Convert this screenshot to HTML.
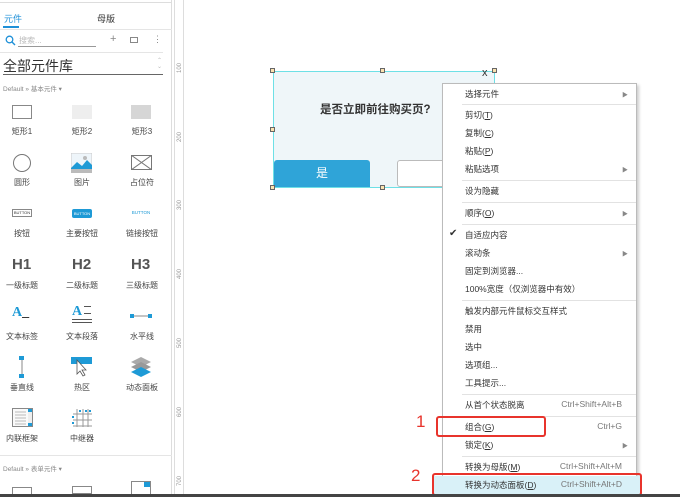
<!DOCTYPE html>
<html><head><meta charset="utf-8"><style>
*{margin:0;padding:0;box-sizing:border-box}
body{width:680px;height:497px;overflow:hidden;background:#fff;font-family:"Liberation Sans","Noto Sans CJK SC",sans-serif;position:relative;color:#333}
.a{position:absolute}
.lbl{position:absolute;font-size:8px;color:#444;width:60px;text-align:center}
.mi{position:absolute;left:465px;font-size:8.5px;color:#333}
.sc{position:absolute;right:58px;font-size:8.5px;color:#777}
.ar{position:absolute;left:622px;font-size:6px;color:#888}
.sep{position:absolute;left:462px;width:174px;height:1px;background:#e2e2e2}
.rl{position:absolute;left:175px;font-size:6px;color:#999;transform:rotate(-90deg)}
.h{position:absolute;width:5px;height:5px;background:#fbe3b0;border:1px solid #666}
</style></head><body>
<div class="a" style="left:0;top:0;width:172px;height:497px;background:#fff;border-right:1px solid #ddd"></div>
<div class="a" style="left:0;top:2px;width:172px;height:1px;background:#ddd"></div>
<div class="a" style="left:4px;top:12px;font-size:9px;color:#1e90d8">元件</div>
<div class="a" style="left:3px;top:26px;width:16px;height:2px;background:#1e90d8"></div>
<div class="a" style="left:97px;top:12px;font-size:9px;color:#333">母版</div>
<div class="a" style="left:0;top:29px;width:172px;height:1px;background:#e5e5e5"></div>
<svg class="a" style="left:5px;top:35px" width="11" height="11"><circle cx="4.5" cy="4.5" r="3.3" stroke="#1e90d8" stroke-width="1.3" fill="none"/><path d="M7 7l3 3" stroke="#1e90d8" stroke-width="1.4"/></svg>
<div class="a" style="left:19px;top:35px;font-size:8px;color:#bbb">搜索...</div>
<div class="a" style="left:18px;top:46px;width:78px;height:1px;background:#999"></div>
<div class="a" style="left:110px;top:33px;font-size:11px;color:#888">+</div>
<div class="a" style="left:130px;top:37px;width:8px;height:6px;border:1px solid #888"></div>
<div class="a" style="left:153px;top:34px;font-size:9px;color:#888">⋮</div>
<div class="a" style="left:0;top:52px;width:163px;height:1px;background:#e5e5e5"></div>
<div class="a" style="left:3px;top:56px;font-size:14px;color:#333">全部元件库</div>
<div class="a" style="left:157px;top:58px;font-size:6px;color:#bbb;line-height:6px">⌃<br>⌄</div>
<div class="a" style="left:3px;top:74px;width:160px;height:1px;background:#666"></div>
<div class="a" style="left:3px;top:83px;font-size:6.5px;color:#888">Default » 基本元件 ▾</div>
<!-- row1 -->
<div class="a" style="left:12px;top:105px;width:20px;height:14px;border:1px solid #888"></div>
<div class="a" style="left:72px;top:105px;width:20px;height:14px;background:#eee"></div>
<div class="a" style="left:131px;top:105px;width:20px;height:14px;background:#d6d6d6"></div>
<div class="lbl" style="left:-8px;top:126px">矩形1</div><div class="lbl" style="left:52px;top:126px">矩形2</div><div class="lbl" style="left:112px;top:126px">矩形3</div>
<!-- row2 -->
<div class="a" style="left:13px;top:154px;width:18px;height:18px;border:1px solid #777;border-radius:50%"></div>
<svg class="a" style="left:71px;top:153px" width="21" height="20"><rect width="21" height="20" fill="#eef5fa" stroke="#ccc"/><path d="M0 15L6 9l5 4 5-6 5 5v8H0z" fill="#1e9ad6"/><circle cx="14" cy="5" r="2" fill="#bbb"/><rect y="16" width="21" height="4" fill="#bbb"/></svg>
<svg class="a" style="left:131px;top:155px" width="21" height="15"><rect x=".5" y=".5" width="20" height="14" fill="none" stroke="#777"/><path d="M0 0L21 15M21 0L0 15" stroke="#777"/></svg>
<div class="lbl" style="left:-8px;top:177px">圆形</div><div class="lbl" style="left:52px;top:177px">图片</div><div class="lbl" style="left:112px;top:177px">占位符</div>
<!-- row3 -->
<div class="a" style="left:12px;top:209px;width:20px;height:8px;border:1px solid #888;font-size:4px;text-align:center;line-height:6px">BUTTON</div>
<div class="a" style="left:72px;top:209px;width:20px;height:9px;background:#1e9ad6;border-radius:2px;font-size:4px;color:#fff;text-align:center;line-height:9px">BUTTON</div>
<div class="a" style="left:131px;top:210px;width:20px;font-size:4.5px;color:#1e9ad6;text-align:center">BUTTON</div>
<div class="lbl" style="left:-8px;top:228px">按钮</div><div class="lbl" style="left:52px;top:228px">主要按钮</div><div class="lbl" style="left:112px;top:228px">链接按钮</div>
<!-- row4 -->
<div class="a" style="left:12px;top:256px;font-size:15px;font-weight:bold;color:#555">H1</div>
<div class="a" style="left:72px;top:256px;font-size:15px;font-weight:bold;color:#555">H2</div>
<div class="a" style="left:131px;top:256px;font-size:15px;font-weight:bold;color:#555">H3</div>
<div class="lbl" style="left:-8px;top:280px">一级标题</div><div class="lbl" style="left:52px;top:280px">二级标题</div><div class="lbl" style="left:112px;top:280px">三级标题</div>
<!-- row5 -->
<div class="a" style="left:12px;top:305px;font-size:14px;font-weight:bold;color:#1e9ad6;font-family:'Liberation Serif',serif">A<span style="color:#333">_</span></div>
<div class="a" style="left:72px;top:304px;font-size:14px;font-weight:bold;color:#1e9ad6;font-family:'Liberation Serif',serif">A</div>
<div class="a" style="left:84px;top:306px;width:7px;height:8px;border-top:1px solid #555;border-bottom:1px solid #555"></div>
<div class="a" style="left:72px;top:319px;width:20px;height:4px;border-top:1px solid #555;border-bottom:1px solid #555"></div>
<svg class="a" style="left:130px;top:313px" width="22" height="6"><path d="M3 3h16" stroke="#888"/><rect y="1" width="4" height="4" fill="#1e9ad6"/><rect x="18" y="1" width="4" height="4" fill="#1e9ad6"/></svg>
<div class="lbl" style="left:-8px;top:331px">文本标签</div><div class="lbl" style="left:52px;top:331px">文本段落</div><div class="lbl" style="left:112px;top:331px">水平线</div>
<!-- row6 -->
<svg class="a" style="left:19px;top:356px" width="6" height="23"><path d="M3 2v19" stroke="#888"/><rect y="0" width="5" height="4" fill="#1e9ad6"/><rect y="18" width="5" height="4" fill="#1e9ad6"/></svg>
<svg class="a" style="left:71px;top:357px" width="21" height="21"><rect width="21" height="7" fill="#1e9ad6"/><path d="M6 3v14l3-3 3 5 2-1-3-5h4z" fill="#fff" stroke="#555" stroke-width=".8"/></svg>
<svg class="a" style="left:130px;top:357px" width="22" height="20"><path d="M11 0l10 5-10 5L1 5z" fill="#aaa"/><path d="M11 5l10 5-10 5L1 10z" fill="#999"/><path d="M11 10l10 5-10 5L1 15z" fill="#1e9ad6"/></svg>
<div class="lbl" style="left:-8px;top:382px">垂直线</div><div class="lbl" style="left:52px;top:382px">热区</div><div class="lbl" style="left:112px;top:382px">动态面板</div>
<!-- row7 -->
<svg class="a" style="left:12px;top:408px" width="21" height="19"><rect x=".5" y=".5" width="20" height="18" fill="#fafafa" stroke="#888"/><path d="M3 4h11M3 7h11M3 10h11M3 13h11M3 16h11" stroke="#bbb"/><rect x="16" y="1" width="4" height="17" fill="#eee"/><rect x="16" y="1" width="4" height="3" fill="#1e9ad6"/><rect x="16" y="15" width="4" height="3" fill="#1e9ad6"/></svg>
<svg class="a" style="left:72px;top:408px" width="20" height="20"><path d="M5 1v18M11 1v18M16 1v18M1 6h19M1 12h19M1 18h19" stroke="#999"/><path d="M7 3h2M13 3h2M17 3h2M1 8v2M1 14v2" stroke="#1e9ad6" stroke-width="2"/></svg>
<div class="lbl" style="left:-8px;top:433px">内联框架</div><div class="lbl" style="left:52px;top:433px">中继器</div>
<div class="a" style="left:0;top:455px;width:172px;height:1px;background:#e5e5e5"></div>
<div class="a" style="left:3px;top:463px;font-size:6.5px;color:#888">Default » 表单元件 ▾</div>
<div class="a" style="left:12px;top:487px;width:20px;height:8px;border:1px solid #888"></div>
<div class="a" style="left:72px;top:486px;width:20px;height:8px;border:1px solid #888"></div>
<div class="a" style="left:131px;top:481px;width:20px;height:14px;border:1px solid #888"></div>
<div class="a" style="left:144px;top:482px;width:6px;height:5px;background:#1e9ad6"></div>
<!-- ruler -->
<div class="a" style="left:174px;top:0;width:10px;height:497px;background:#fff;border-left:1px solid #ddd;border-right:1px solid #ddd"></div>
<div class="rl" style="top:65px">100</div><div class="rl" style="top:134px">200</div><div class="rl" style="top:202px">300</div><div class="rl" style="top:271px">400</div><div class="rl" style="top:340px">500</div><div class="rl" style="top:409px">600</div><div class="rl" style="top:478px">700</div>
<!-- dialog -->
<div class="a" style="left:273px;top:71px;width:222px;height:117px;background:#eff6f9;border:1px solid #6ee0e6"></div>
<div class="a" style="left:320px;top:101px;font-size:11.5px;font-weight:bold;color:#333">是否立即前往购买页?</div>
<div class="a" style="left:482px;top:67px;font-size:11px;color:#333">x</div>
<div class="a" style="left:274px;top:160px;width:96px;height:27px;background:#2fa4d8;border-radius:3px 3px 0 0;color:#fff;font-size:12px;text-align:center;line-height:27px">是</div>
<div class="a" style="left:397px;top:160px;width:60px;height:27px;border:1px solid #bbb;border-radius:3px;background:#fff"></div>
<div class="h" style="left:270px;top:68px"></div><div class="h" style="left:380px;top:68px"></div><div class="h" style="left:270px;top:127px"></div><div class="h" style="left:270px;top:185px"></div><div class="h" style="left:380px;top:185px"></div><div class="h" style="left:492px;top:68px"></div>
<!-- menu -->
<div class="a" style="left:442px;top:83px;width:195px;height:414px;background:#fff;border:1px solid #bbb;box-shadow:2px 2px 3px rgba(0,0,0,.2)"></div>
<div class="a" style="left:432px;top:476px;width:210px;height:19px;background:#d9f1f8"></div>
<div class="mi" style="top:88px">选择元件</div><div class="ar" style="top:90px">▶</div>
<div class="sep" style="top:104px"></div>
<div class="mi" style="top:109px">剪切(<u>T</u>)</div>
<div class="mi" style="top:127px">复制(<u>C</u>)</div>
<div class="mi" style="top:145px">粘贴(<u>P</u>)</div>
<div class="mi" style="top:163px">粘贴选项</div><div class="ar" style="top:165px">▶</div>
<div class="sep" style="top:180px"></div>
<div class="mi" style="top:185px">设为隐藏</div>
<div class="sep" style="top:202px"></div>
<div class="mi" style="top:207px">顺序(<u>O</u>)</div><div class="ar" style="top:209px">▶</div>
<div class="sep" style="top:224px"></div>
<div class="a" style="left:449px;top:228px;font-size:10px;color:#333">✔</div>
<div class="mi" style="top:229px">自适应内容</div>
<div class="mi" style="top:247px">滚动条</div><div class="ar" style="top:249px">▶</div>
<div class="mi" style="top:265px">固定到浏览器...</div>
<div class="mi" style="top:283px">100%宽度（仅浏览器中有效）</div>
<div class="sep" style="top:300px"></div>
<div class="mi" style="top:305px">触发内部元件鼠标交互样式</div>
<div class="mi" style="top:323px">禁用</div>
<div class="mi" style="top:341px">选中</div>
<div class="mi" style="top:359px">选项组...</div>
<div class="mi" style="top:377px">工具提示...</div>
<div class="sep" style="top:394px"></div>
<div class="mi" style="top:399px">从首个状态脱离</div><div class="sc" style="top:399px">Ctrl+Shift+Alt+B</div>
<div class="sep" style="top:416px"></div>
<div class="mi" style="top:421px">组合(<u>G</u>)</div><div class="sc" style="top:421px">Ctrl+G</div>
<div class="mi" style="top:439px">锁定(<u>K</u>)</div><div class="ar" style="top:441px">▶</div>
<div class="sep" style="top:456px"></div>
<div class="mi" style="top:461px">转换为母版(<u>M</u>)</div><div class="sc" style="top:461px">Ctrl+Shift+Alt+M</div>
<div class="mi" style="top:479px">转换为动态面板(<u>D</u>)</div><div class="sc" style="top:479px">Ctrl+Shift+Alt+D</div>
<!-- red boxes -->
<div class="a" style="left:436px;top:416px;width:110px;height:21px;border:2px solid #e8342c;border-radius:3px"></div>
<div class="a" style="left:432px;top:473px;width:210px;height:23px;border:2px solid #e8342c;border-radius:3px"></div>
<div class="a" style="left:416px;top:412px;font-size:17px;color:#e8342c">1</div>
<div class="a" style="left:411px;top:466px;font-size:17px;color:#e8342c">2</div>
<div class="a" style="left:0;top:494px;width:680px;height:3px;background:#444"></div>
</body></html>
